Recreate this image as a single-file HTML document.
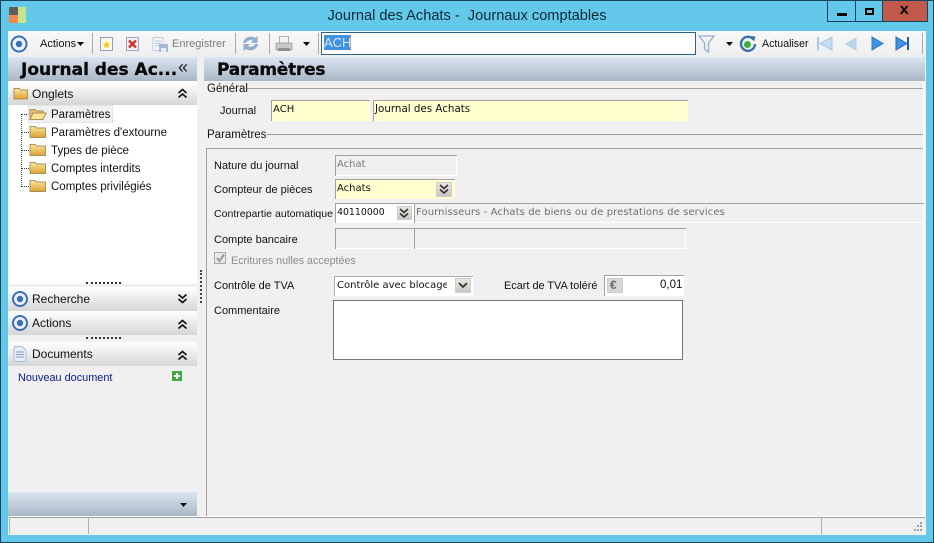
<!DOCTYPE html>
<html><head><meta charset="utf-8">
<style>
html,body{margin:0;padding:0}
body{width:934px;height:543px;overflow:hidden;position:relative;background:#63c8e9;font-family:"Liberation Sans",sans-serif;font-size:11px;color:#111}
div,span.a,svg{position:absolute}
.t{white-space:nowrap;line-height:14px}
.tr{font-size:11.5px}
.hd{background:linear-gradient(#d9e5f0,#a9b7c5)}
.ph{background:linear-gradient(#fff,#d6d6d6);left:8px;width:189px}
.f{box-sizing:border-box;border-top:1px solid #a0a0a0;border-left:1px solid #a0a0a0}
.y{background:#ffffcf}
.v{font-family:"DejaVu Sans",sans-serif;font-size:10px;line-height:13px;white-space:nowrap}
.btn{box-sizing:border-box;background:linear-gradient(#e8e8e0,#c8c8c0);border:1px solid #ccc}
.ln{background:#a0a0a0;height:1px}
.sep{width:1px;background:#a9a9a9;top:33px;height:21px}
.dot{border-top:1px dotted #333;height:0}
.big{font-size:17px;line-height:22px;font-weight:bold;font-family:'DejaVu Sans',sans-serif;color:#0a0a0a;-webkit-text-stroke:.3px #0a0a0a}
</style></head><body>
<div style="left:0;top:0;width:934px;height:543px;box-sizing:border-box;border:1px solid #17465a"></div>
<svg style="left:9px;top:7px" width="18" height="17"><rect x="0" y="0" width="9" height="8" fill="#5e5e5e"/><rect x="9" y="0" width="8" height="16" fill="#c4e58c"/><rect x="0" y="8" width="9" height="8" fill="#f08a50"/></svg>
<div class="t" style="left:0;width:934px;top:8px;text-align:center;font-size:14.6px;line-height:16px;color:#0e2a36">Journal des Achats -&nbsp; Journaux comptables</div>
<div style="left:827px;top:1px;width:29px;height:21px;box-sizing:border-box;border:1px solid #17465a;border-top:0;background:#63c8e9"><div style="left:9px;top:12px;width:10px;height:3px;background:#000"></div></div>
<div style="left:855px;top:1px;width:28px;height:21px;box-sizing:border-box;border:1px solid #17465a;border-top:0;background:#63c8e9"><div style="left:9px;top:7px;width:9px;height:7px;box-sizing:border-box;border:2px solid #000"></div></div>
<div style="left:882px;top:1px;width:46px;height:21px;box-sizing:border-box;border:1px solid #17465a;border-top:0;background:#c15a4c"><div class="t" style="left:17px;top:2px;font-weight:bold;font-size:15px;color:#000;transform:scaleX(1.1)">x</div></div>

<div style="left:8px;top:31px;width:918px;height:504px;background:#f0f0f0"></div>
<div style="left:8px;top:31px;width:918px;height:26px;background:linear-gradient(#f8f8f8,#eeeeee)"></div>

<svg style="left:10px;top:35px" width="18" height="18"><circle cx="9" cy="9" r="7.500" fill="#eef3fa" stroke="#3a70b8" stroke-width="2"/><circle cx="9" cy="9" r="3.200" fill="#3a70b8"/></svg>
<div class="t" style="left:40px;top:37px;font-size:11px">Actions</div>
<svg style="left:77px;top:42px" width="8" height="5"><path d="M0 0H7L3.500 4Z" fill="#111"/></svg>
<div class="sep" style="left:92px"></div>
<svg style="left:99px;top:36px" width="16" height="16"><rect x="1.500" y="1.500" width="12" height="13" fill="#fdf8e0" stroke="#8aa3c4"/><path d="M7.500 5l1.200 2.500 2.500.3-1.800 1.700.5 2.500-2.400-1.300-2.400 1.300.5-2.500-1.800-1.700 2.500-.3z" fill="#f2c81e"/></svg>
<svg style="left:125px;top:36px" width="16" height="16"><rect x="1.500" y="1.500" width="12" height="13" fill="#f6eef0" stroke="#9aa8c4"/><path d="M4 4.500l7 7M11 4.500l-7 7" stroke="#d8322c" stroke-width="2.400"/></svg>
<svg style="left:152px;top:37px" width="17" height="16"><rect x="1" y="0.500" width="10" height="13" fill="#f2f5fa" stroke="#c2cfe0"/><path d="M3 4h6M3 6.500h6M3 9h4" stroke="#b9c8dc"/><rect x="7" y="7" width="9" height="8" fill="#a6b6d4"/><rect x="9" y="11" width="5" height="4" fill="#e6ecf5"/></svg>
<div class="t" style="left:172px;top:37px;font-size:11px;color:#7b7b7b">Enregistrer</div>
<div class="sep" style="left:235px"></div>
<svg style="left:241px;top:34px" width="19" height="19"><path d="M2 9C3 3 10 1 14 4L16.500 2V9H10L12 7C9.500 5.500 6 6.500 5 9ZM17 10C16 16 9 18 5 15L2.500 17V10H9L7 12C9.500 13.500 13 12.500 14 10Z" fill="#94aeca"/></svg>
<div class="sep" style="left:269px"></div>
<svg style="left:275px;top:35px" width="18" height="18"><rect x="4.500" y="1.500" width="9" height="7" fill="#f4f4f4" stroke="#b0b0b0"/><rect x="1" y="8" width="16" height="7" rx="1" fill="#c9c9c9" stroke="#a4a4a4"/><rect x="3" y="13" width="12" height="3" fill="#8f8f8f"/></svg>
<svg style="left:303px;top:42px" width="8" height="5"><path d="M0 0H7L3.500 4Z" fill="#111"/></svg>
<div class="sep" style="left:318px"></div>
<div style="left:321px;top:32px;width:375px;height:23px;box-sizing:border-box;border:1px solid #2f6281;background:#fff"></div>
<div class="t" style="left:324px;top:35px;width:27px;height:15px;background:#3f92e0;color:#dbe8f5;font-size:13px;line-height:15px;border-right:1px solid #d58a3c;box-sizing:border-box">ACH</div>
<svg style="left:698px;top:34px" width="18" height="20"><path d="M1 2H16L10.500 9V18L6.500 15V9Z" fill="#eef3f8" stroke="#98aec6" stroke-width="1.300"/></svg>
<svg style="left:726px;top:42px" width="8" height="5"><path d="M0 0H7L3.500 4Z" fill="#111"/></svg>
<svg style="left:739px;top:35px" width="18" height="18"><path d="M14.500 4.500A7 7 0 1 0 16 9" fill="none" stroke="#3a70a8" stroke-width="2.400"/><path d="M11 1L16.500 1.500L15 6.500Z" fill="#3a70a8"/><circle cx="8.500" cy="9.500" r="3.500" fill="#3cb43c"/></svg>
<div class="t" style="left:762px;top:37px;font-size:10.6px">Actualiser</div>
<svg style="left:816px;top:36px" width="18" height="16"><rect x="1" y="1" width="2" height="13" fill="#a9c8ea"/><path d="M16 1V14L4 7.500Z" fill="#c4dcf2" stroke="#a9c8ea"/></svg>
<svg style="left:844px;top:36px" width="14" height="16"><path d="M12 2V14L2 8Z" fill="#bcd6f0" stroke="#b4cfe9"/></svg>
<svg style="left:870px;top:36px" width="14" height="16"><path d="M2 1V14L13 7.500Z" fill="#3e93e4" stroke="#2d78c4"/></svg>
<svg style="left:894px;top:36px" width="18" height="16"><path d="M2 1V14L13 7.500Z" fill="#3e93e4" stroke="#2a6cb0"/><rect x="13" y="1" width="2" height="13" fill="#1f5f9e"/></svg>
<div class="sep" style="left:922px"></div>

<div class="hd" style="left:8px;top:57px;width:189px;height:24px"></div>
<div class="t big" style="left:21px;top:59px">Journal des Ac...</div>
<div class="t" style="left:178px;top:60px;font-size:18px;color:#222">«</div>
<div class="hd" style="left:204px;top:57px;width:721px;height:24px"></div>
<div class="t big" style="left:217px;top:59px;letter-spacing:-.25px">Paramètres</div>

<div style="left:8px;top:81px;width:189px;height:203px;background:#fff"></div>
<div class="ph" style="top:82px;height:23px"></div>
<svg style="left:13px;top:86px" width="16" height="14"><path d="M1 2.500H6L7.500 4H14.500V13H1Z" fill="url(#g)" stroke="#a8925c"/></svg>
<div class="t tr" style="left:32px;top:87px;font-size:12px">Onglets</div>
<svg style="left:177px;top:88px" width="11" height="11" fill="none" stroke="#111" stroke-width="1.600"><path d="M1.500 5L5.500 1.500L9.500 5M1.500 9.500L5.500 6L9.500 9.500"/></svg>

<div style="left:21px;top:114px;width:0;height:73px;border-left:1px dotted #555"></div>
<div class="dot" style="left:21px;top:114px;width:8px"></div>
<div class="dot" style="left:21px;top:132px;width:8px"></div>
<div class="dot" style="left:21px;top:150px;width:8px"></div>
<div class="dot" style="left:21px;top:168px;width:8px"></div>
<div class="dot" style="left:21px;top:186px;width:8px"></div>
<div style="left:28px;top:105px;width:85px;height:18px;background:#f0f0f0;box-sizing:border-box;border:1px solid #e4e4e4"></div>
<svg style="left:29px;top:107px" width="18" height="14"><path d="M1 12V2.500H6L7.500 4H14V6.500" fill="#e9c06a" stroke="#a8925c"/><path d="M1 12.500L4 6H17L14 12.500Z" fill="#fbe38e" stroke="#a8925c"/></svg>
<svg style="left:29px;top:125px" width="18" height="14"><defs><linearGradient id="g" x1="0" y1="0" x2="0" y2="1"><stop offset="0" stop-color="#fbe9a0"/><stop offset="1" stop-color="#dca030"/></linearGradient></defs><path d="M1 1.500H6L7.500 3H16.500V12.500H1Z" fill="url(#g)" stroke="#a8925c"/></svg>
<svg style="left:29px;top:143px" width="18" height="14"><path d="M1 1.500H6L7.500 3H16.500V12.500H1Z" fill="url(#g)" stroke="#a8925c"/></svg>
<svg style="left:29px;top:161px" width="18" height="14"><path d="M1 1.500H6L7.500 3H16.500V12.500H1Z" fill="url(#g)" stroke="#a8925c"/></svg>
<svg style="left:29px;top:179px" width="18" height="14"><path d="M1 1.500H6L7.500 3H16.500V12.500H1Z" fill="url(#g)" stroke="#a8925c"/></svg>
<div class="t tr" style="left:51px;top:108px">Paramètres</div>
<div class="t tr" style="left:51px;top:126px">Paramètres d'extourne</div>
<div class="t tr" style="left:51px;top:144px;font-size:11.6px">Types de pièce</div>
<div class="t tr" style="left:51px;top:162px">Comptes interdits</div>
<div class="t tr" style="left:51px;top:180px">Comptes privilégiés</div>

<div class="dot" style="left:86px;top:282px;width:35px;border-top:2px dotted #333"></div>
<div style="left:200px;top:270px;height:33px;width:0;border-left:2px dotted #444"></div>
<div class="ph" style="top:287px;height:24px"></div>
<svg style="left:11px;top:290px" width="18" height="18"><circle cx="9" cy="9" r="7" fill="#eef3fa" stroke="#3a70b8" stroke-width="2"/><circle cx="9" cy="9" r="3.200" fill="#3a70b8"/></svg>
<div class="t" style="left:32px;top:292px;font-size:12px">Recherche</div>
<svg style="left:177px;top:293px" width="11" height="11" fill="none" stroke="#111" stroke-width="1.600"><path d="M1.500 1.500L5.500 5L9.500 1.500M1.500 6L5.500 9.500L9.500 6"/></svg>
<div class="ph" style="top:311px;height:24px"></div>
<svg style="left:11px;top:314px" width="18" height="18"><circle cx="9" cy="9" r="7" fill="#eef3fa" stroke="#3a70b8" stroke-width="2"/><circle cx="9" cy="9" r="3.200" fill="#3a70b8"/></svg>
<div class="t" style="left:32px;top:316px;font-size:12px">Actions</div>
<svg style="left:177px;top:319px" width="11" height="11" fill="none" stroke="#111" stroke-width="1.600"><path d="M1.500 5L5.500 1.500L9.500 5M1.500 9.500L5.500 6L9.500 9.500"/></svg>
<div class="dot" style="left:86px;top:337px;width:35px;border-top:2px dotted #333"></div>
<div class="ph" style="top:342px;height:24px"></div>
<svg style="left:13px;top:346px" width="14" height="16"><path d="M1 .5H9L13 4.500V15.500H1Z" fill="#e6eef9" stroke="#a9bcd8"/><path d="M3 6H11M3 8.500H11M3 11H11" stroke="#7e9cc8"/></svg>
<div class="t" style="left:32px;top:347px;font-size:12px">Documents</div>
<svg style="left:177px;top:350px" width="11" height="11" fill="none" stroke="#111" stroke-width="1.600"><path d="M1.500 5L5.500 1.500L9.500 5M1.500 9.500L5.500 6L9.500 9.500"/></svg>
<div class="t" style="left:18px;top:371px;font-size:10.9px;color:#0a1c8c">Nouveau document</div>
<svg style="left:172px;top:371px" width="11" height="11"><rect width="10" height="10" fill="#3fa84a"/><path d="M5 2V8M2 5H8" stroke="#fff" stroke-width="2"/></svg>
<div class="hd" style="left:8px;top:492px;width:189px;height:24px"></div>
<svg style="left:180px;top:503px" width="8" height="5"><path d="M0 0H7L3.500 4Z" fill="#111"/></svg>
<div style="left:206px;top:148px;width:1px;height:368px;background:#a0a0a0"></div>

<div class="t tr" style="left:207px;top:82px">Général</div>
<div class="ln" style="left:247px;top:88px;width:676px"></div>
<div class="t" style="left:220px;top:104px">Journal</div>
<div class="f y" style="left:271px;top:100px;width:99px;height:21px"></div>
<div class="v" style="left:273px;top:103px;letter-spacing:.05px">ACH</div>
<div class="f y" style="left:373px;top:100px;width:315px;height:21px"></div>
<div class="v" style="left:375px;top:103px;font-size:10.3px">Journal des Achats</div>
<div class="t tr" style="left:207px;top:128px">Paramètres</div>
<div class="ln" style="left:267px;top:134px;width:656px"></div>
<div style="left:206px;top:148px;width:717px;height:1px;background:#a0a0a0"></div>
<div style="left:923px;top:82px;width:2px;height:434px;background:#fff"></div>

<div class="t" style="left:214px;top:159px">Nature du journal</div>
<div class="f" style="left:335px;top:155px;width:122px;height:21px;background:#f0f0f0;box-shadow:inset -1px -1px #fff"></div>
<div class="v" style="left:337px;top:158px;color:#777">Achat</div>
<div class="t" style="left:214px;top:183px">Compteur de pièces</div>
<div class="f y" style="left:335px;top:179px;width:120px;height:20px"></div>
<div class="v" style="left:337px;top:182px">Achats</div>
<div class="btn" style="left:436px;top:182px;width:16px;height:15px"></div>
<svg style="left:439px;top:184px" width="11" height="11" fill="none" stroke="#333" stroke-width="1.600"><path d="M1 1L5 4.500L9 1M1 5.500L5 9L9 5.500"/></svg>

<div class="t" style="left:214px;top:207px;font-size:10.55px">Contrepartie automatique</div>
<div class="f" style="left:335px;top:203px;width:79px;height:20px;background:#fff"></div>
<div class="v" style="left:337px;top:206px;font-size:9.4px">40110000</div>
<div class="btn" style="left:397px;top:206px;width:15px;height:14px"></div>
<svg style="left:399px;top:208px" width="11" height="11" fill="none" stroke="#333" stroke-width="1.600"><path d="M1 1L5 4.500L9 1M1 5.500L5 9L9 5.500"/></svg>
<div class="f" style="left:414px;top:203px;width:510px;height:20px;box-shadow:inset 0 -1px #fff"></div>
<div class="v" style="left:416px;top:206px;color:#6f6f6f;letter-spacing:.1px">Fournisseurs - Achats de biens ou de prestations de services</div>

<div class="t" style="left:214px;top:233px">Compte bancaire</div>
<div class="f" style="left:335px;top:228px;width:79px;height:21px;box-shadow:inset 0 -1px #fff"></div>
<div class="f" style="left:414px;top:228px;width:272px;height:21px;box-shadow:inset -1px -1px #fff"></div>
<div style="left:214px;top:252px;width:12px;height:12px;box-sizing:border-box;border:1px solid #aaa;background:#e8e8e8"></div>
<svg style="left:215px;top:253px" width="11" height="11" fill="none" stroke="#999" stroke-width="2"><path d="M2 5L4.500 8L9 1.500"/></svg>
<div class="t" style="left:231px;top:254px;color:#8c8c8c;font-size:10.7px">Ecritures nulles acceptées</div>

<div class="t" style="left:214px;top:279px">Contrôle de TVA</div>
<div style="left:334px;top:276px;width:139px;height:20px;background:#fff;box-sizing:border-box;border-top:1px solid #b0b0b0;border-left:1px solid #b0b0b0"></div>
<div class="v" style="left:337px;top:279px;width:110px;overflow:hidden">Contrôle avec blocage</div>
<div class="btn" style="left:455px;top:278px;width:16px;height:15px"></div>
<svg style="left:458px;top:282px" width="11" height="8" fill="none" stroke="#333" stroke-width="1.800"><path d="M1 1L5 5L9 1"/></svg>
<div class="t" style="left:504px;top:279px;font-size:10.9px">Ecart de TVA toléré</div>
<div class="f" style="left:604px;top:275px;width:80px;height:21px;background:#fff"></div>
<div class="btn" style="left:607px;top:278px;width:16px;height:15px;background:#d8d8d8"></div>
<div class="t" style="left:610px;top:278px;font-size:12px;color:#666;font-weight:bold">€</div>
<div class="t" style="left:660px;top:278px;width:22px;text-align:right;font-size:11.500px">0,01</div>
<div class="t" style="left:214px;top:304px">Commentaire</div>
<div style="left:333px;top:300px;width:350px;height:60px;box-sizing:border-box;border:1px solid #777;background:#fff"></div>

<div style="left:8px;top:516px;width:918px;height:19px;background:#f0f0f0;box-sizing:border-box;border-top:1px solid #fff"></div>
<div class="ln" style="left:9px;top:517px;width:916px"></div>
<div style="left:9px;top:517px;width:1px;height:17px;background:#b0b0b0"></div>
<div style="left:88px;top:517px;width:1px;height:17px;background:#b0b0b0"></div>
<div style="left:821px;top:517px;width:1px;height:17px;background:#b0b0b0"></div>
<svg style="left:910px;top:521px" width="14" height="13" fill="#a0a0a0"><rect x="10" y="1" width="2" height="2"/><rect x="7" y="4" width="2" height="2"/><rect x="10" y="4" width="2" height="2"/><rect x="4" y="8" width="2" height="2"/><rect x="7" y="8" width="2" height="2"/><rect x="10" y="8" width="2" height="2"/></svg>
</body></html>
